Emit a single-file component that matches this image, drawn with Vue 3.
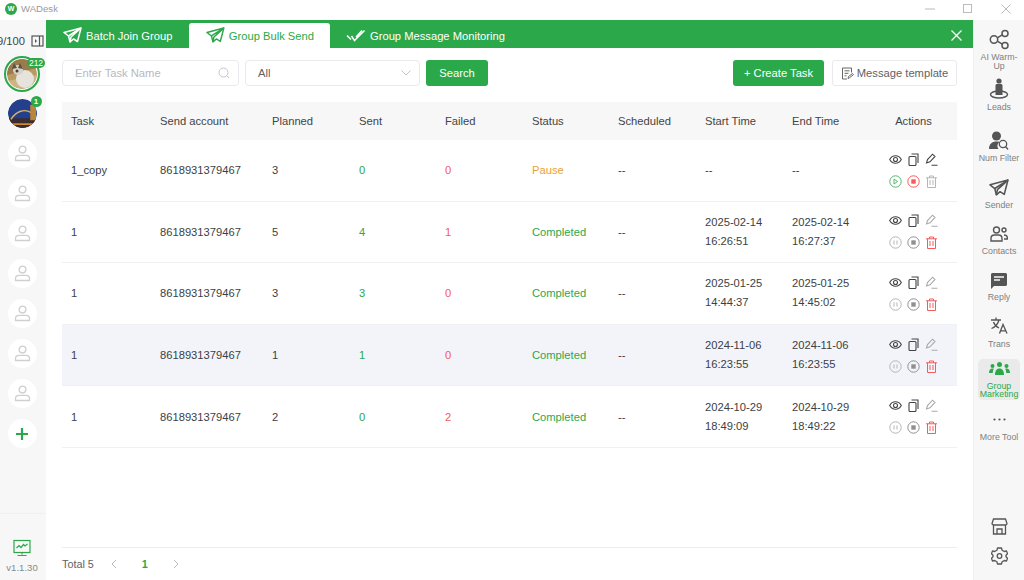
<template>
  <div class="app">
    <header class="titlebar">
      <div class="brand">
        <span class="logo">W</span>
        <span>WADesk</span>
      </div>
      <div class="win-btns">
        <svg width="12" height="12" viewBox="0 0 12 12"><path d="M1 6h10" stroke="#bbb" fill="none" /></svg>
        <svg width="12" height="12" viewBox="0 0 12 12"><rect x="1.5" y="1.5" width="8" height="8" stroke="#bbb" fill="none" /></svg>
        <svg width="12" height="12" viewBox="0 0 12 12"><path d="M1.5 1.5l9 9M10.5 1.5l-9 9" stroke="#bbb" fill="none" /></svg>
      </div>
    </header>

    <div class="body">
      <aside class="left">
        <div class="count-row">
          <span>9/100</span>
          <svg width="13" height="12" viewBox="0 0 13 12">
            <rect x="1" y="1" width="11" height="10" fill="none" stroke="#555" stroke-width="1.2" />
            <path d="M8.5 1v10" stroke="#555" stroke-width="1.2" />
            <path d="M4 4l2 2-2 2z" fill="#555" />
          </svg>
        </div>

        <div class="acct-list">
          <div class="acct acct-main">
            <svg class="ava" width="30" height="30" viewBox="0 0 30 30">
              <defs><clipPath id="c1"><circle cx="15" cy="15" r="15" /></clipPath></defs>
              <g clip-path="url(#c1)">
                <rect width="30" height="30" fill="#b99a63" />
                <path d="M0 0h30v9L0 16z" fill="#9a7c4b" />
                <path d="M0 22l30-6v14H0z" fill="#cdb483" />
                <ellipse cx="18" cy="20" rx="9" ry="9" fill="#e6e2dc" />
                <ellipse cx="11" cy="11" rx="5" ry="5" fill="#d8d2c8" />
                <path d="M7 4l3 5-5 1zM13 4l3 6-5-1z" fill="#5c5148" />
                <circle cx="10" cy="12" r="1.5" fill="#4a4038" />
              </g>
            </svg>
            <span class="badge badge-wide">212</span>
          </div>
          <div class="acct">
            <svg class="ava" width="29" height="29" viewBox="0 0 30 30">
              <defs><clipPath id="c2"><circle cx="15" cy="15" r="15" /></clipPath></defs>
              <g clip-path="url(#c2)">
                <rect width="30" height="30" fill="#243f8c" />
                <rect y="20" width="30" height="10" fill="#3c2c2e" />
                <path d="M3 21C9 12 17 10 24 14" stroke="#d9b26a" stroke-width="1.5" fill="none" />
                <path d="M23 6h6v16h-6z" fill="#b9853a" />
                <path d="M0 25h30v2H0z" fill="#c98a32" />
              </g>
            </svg>
            <span class="badge">1</span>
          </div>
          <div v-for="n in 7" :key="n" class="acct empty">
            <svg width="17" height="17" viewBox="0 0 17 17" fill="none" stroke="#cfcfcf" stroke-width="1.3">
              <circle cx="8.5" cy="4.6" r="3.4" />
              <path d="M1.5 15.5v-2c0-2 1.6-3.2 3.5-3.2h7c1.9 0 3.5 1.2 3.5 3.2v2z" />
            </svg>
          </div>
          <div class="acct empty">
            <svg width="14" height="14" viewBox="0 0 14 14"><path d="M7 1v12M1 7h12" stroke="#2ba84a" stroke-width="2.2" fill="none" /></svg>
          </div>
        </div>

        <div class="left-foot">
          <svg width="18" height="18" viewBox="0 0 18 18" fill="none" stroke="#2ba84a" stroke-width="1.2">
            <rect x="1" y="1.5" width="16" height="12" />
            <path d="M3.5 9L6 6.5l2 2 2.500-3L12 7l2.500-2" />
            <path d="M9 13.5v2M4.500 16.500h9" />
          </svg>
          <span class="version">v1.1.30</span>
        </div>
      </aside>

      <main class="main">
        <nav class="tabs">
          <div v-for="tab in tabs" :key="tab.label" class="tab" :class="{ active: tab.active, 'tab-check': tab.check }">
            <svg v-if="tab.check" width="20" height="14" viewBox="0 0 20 14" fill="none" stroke="currentColor" stroke-width="1.5">
              <path d="M1 6.500l4 4M5.500 7l3 4.500L18.500 1.500M10 8l6-6.500" />
            </svg>
            <svg v-else width="19" height="17" viewBox="0 0 19 17" fill="none" stroke="currentColor" stroke-width="1.5" stroke-linejoin="round">
              <path d="M18 1L1 5.500l4.500 3.500L7 15l3.500-3 4 2.500z" />
              <path d="M18 1L5.500 9M7 15l1-5 10-9" />
            </svg>
            <span>{{ tab.label }}</span>
          </div>
          <svg class="tabs-close" width="11" height="11" viewBox="0 0 11 11"><path d="M.5.500l10 10M10.500.500l-10 10" stroke="#fff" stroke-width="1.3" fill="none" /></svg>
        </nav>

        <div class="content">
          <div class="toolbar">
            <div class="field name-field">
              <span class="placeholder">Enter Task Name</span>
              <svg width="12" height="12" viewBox="0 0 12 12" fill="none" stroke="#c0c4cc"><circle cx="5.5" cy="5.5" r="4.5" /><path d="M9 9l2 2" /></svg>
            </div>
            <div class="field select-field">
              <span>All</span>
              <svg width="10" height="6" viewBox="0 0 10 6" fill="none" stroke="#c0c4cc"><path d="M.5.500L5 5 9.500.500" /></svg>
            </div>
            <button class="btn primary search">Search</button>
            <div class="spacer"></div>
            <button class="btn primary create">+ Create Task</button>
            <button class="btn plain tmpl">
              <svg width="13" height="13" viewBox="0 0 13 13" fill="none" stroke="#666">
                <path d="M10.500 5.500V1H1.500v11h4.500" />
                <path d="M3.500 3.800h5M3.500 6.300h4M3.500 8.800h2" />
                <path d="M7 11.500l.5-2 4-3 1 1.200-4 3z" />
              </svg>
              <span>Message template</span>
            </button>
          </div>

          <div class="table">
            <div class="tr th">
              <div v-for="h in headers" :key="h" class="td" :class="{ center: h === 'Actions' }">{{ h }}</div>
            </div>
            <div v-for="(r, i) in rows" :key="i" class="tr" :class="{ hover: i === 3 }">
              <div class="td">{{ r.task }}</div>
              <div class="td">8618931379467</div>
              <div class="td">{{ r.planned }}</div>
              <div class="td green">{{ r.sent }}</div>
              <div class="td red">{{ r.failed }}</div>
              <div class="td" :class="r.status === 'Pause' ? 'orange' : 'green'">{{ r.status }}</div>
              <div class="td">--</div>
              <div class="td times">{{ r.start }}</div>
              <div class="td times">{{ r.end }}</div>
              <div class="td actions">
                <div class="act-row">
                  <svg width="13" height="13" viewBox="0 0 13 13" fill="none" stroke="#444" stroke-width="1.1">
                    <path d="M.7 6.500C2 4 4 2.800 6.500 2.800S11 4 12.300 6.500C11 9 9 10.200 6.500 10.200S2 9 .7 6.500z" />
                    <circle cx="6.500" cy="6.500" r="2" />
                  </svg>
                  <svg width="13" height="13" viewBox="0 0 13 13" fill="none" stroke="#444" stroke-width="1.1">
                    <rect x="2" y="3.500" width="7" height="9" rx="1" />
                    <path d="M4.500 1h6.500v9" />
                  </svg>
                  <svg width="13" height="13" viewBox="0 0 13 13" fill="none" :stroke="r.paused ? '#444' : '#aaa'" stroke-width="1.1">
                    <path d="M1.500 10l1-3.500L7.500 1.200l2.500 2.300-5 5.300zM6.500 12.300h6" />
                  </svg>
                </div>
                <div class="act-row">
                  <svg width="13" height="13" viewBox="0 0 13 13" fill="none" :stroke="r.paused ? '#58b56f' : '#b5b5b5'">
                    <circle cx="6.500" cy="6.500" r="5.700" />
                    <path v-if="r.paused" d="M5 4l3.500 2.500L5 9z" />
                    <path v-else d="M5 4.500v4M8 4.500v4" />
                  </svg>
                  <svg width="13" height="13" viewBox="0 0 13 13" fill="none" :stroke="r.paused ? '#f45b5b' : '#909090'">
                    <circle cx="6.500" cy="6.500" r="5.700" />
                    <rect x="4.300" y="4.300" width="4.400" height="4.400" :fill="r.paused ? '#f45b5b' : '#909090'" stroke="none" />
                  </svg>
                  <svg width="13" height="13" viewBox="0 0 13 13" fill="none" :stroke="r.paused ? '#b5b5b5' : '#f45b5b'">
                    <path d="M1 2.800h11M4.500 2.800V1h4v1.800M2.500 2.800v9.700h8V2.800M5 5v5M8 5v5" />
                  </svg>
                </div>
              </div>
            </div>
          </div>

          <div class="pager">
            <span>Total 5</span>
            <svg width="6" height="10" viewBox="0 0 6 10" fill="none" stroke="#b5b9c2"><path d="M5 1L1 5l4 4" /></svg>
            <span class="page-num">1</span>
            <svg width="6" height="10" viewBox="0 0 6 10" fill="none" stroke="#b5b9c2"><path d="M1 1l4 4-4 4" /></svg>
          </div>
        </div>
      </main>

      <aside class="right">
        <div class="tool tool-warm">
          <svg width="21" height="21" viewBox="0 0 21 21" fill="none" stroke="#555" stroke-width="1.5">
            <circle cx="5" cy="10.500" r="3.700" /><circle cx="16" cy="4.500" r="3" /><circle cx="16" cy="16.500" r="3" />
            <path d="M8.300 8.800l5-3M8.300 12.200l5 3" />
          </svg>
          <span>AI Warm-Up</span>
        </div>
        <div class="tool tool-leads">
          <svg width="20" height="22" viewBox="0 0 20 22" fill="#555">
            <circle cx="10" cy="3" r="2.600" />
            <path d="M6.500 7.500c0-1 .8-1.500 1.500-1.500h4c.7 0 1.500.5 1.500 1.500V17h-7z" />
            <ellipse cx="10" cy="16.500" rx="8.500" ry="3.500" fill="none" stroke="#555" stroke-width="1.5" />
          </svg>
          <span>Leads</span>
        </div>
        <div class="tool tool-filter">
          <svg width="20" height="20" viewBox="0 0 20 20" fill="#555">
            <circle cx="7.500" cy="5" r="4.500" />
            <path d="M0 18c0-5 3-7.500 7.500-7.500 1 0 2 .1 2.800.4A5.500 5.500 0 0 0 9.500 18z" />
            <circle cx="14" cy="13" r="3.700" fill="none" stroke="#555" stroke-width="1.3" />
            <path d="M16.500 15.500L19 18.500" stroke="#555" stroke-width="1.3" />
          </svg>
          <span>Num Filter</span>
        </div>
        <div class="tool tool-sender">
          <svg width="20" height="18" viewBox="0 0 19 17" fill="none" stroke="#555" stroke-width="1.5" stroke-linejoin="round">
            <path d="M18 1L1 5.500l4.500 3.500L7 15l3.500-3 4 2.500z" />
            <path d="M18 1L5.500 9M7 15l1-5 10-9" />
          </svg>
          <span>Sender</span>
        </div>
        <div class="tool tool-contacts">
          <svg width="18" height="16" viewBox="0 0 18 16" fill="none" stroke="#555" stroke-width="1.4">
            <circle cx="6.500" cy="4" r="3" />
            <path d="M1 15v-2.500C1 10.500 2.500 9 4.500 9h4c2 0 3.500 1.500 3.500 3.500V15z" />
            <circle cx="14" cy="4" r="2" />
            <path d="M14 9c2 0 3.300 1 3.300 3v1H14" />
          </svg>
          <span>Contacts</span>
        </div>
        <div class="tool tool-reply">
          <svg width="16" height="16" viewBox="0 0 16 16">
            <path d="M0 1.500C0 .7.700 0 1.500 0h13c.8 0 1.500.7 1.500 1.500v10c0 .8-.7 1.500-1.500 1.500H3l-3 3z" fill="#555" />
            <path d="M3 4h10M3 7h6" stroke="#f7f7f7" stroke-width="1.4" />
          </svg>
          <span>Reply</span>
        </div>
        <div class="tool tool-trans">
          <svg width="17" height="17" viewBox="0 0 17 17" fill="none" stroke="#555" stroke-width="1.3">
            <path d="M0 3h10M5 .5V3M8 3C7 7 4 10 .5 11.500M2.500 5c1 3 3.500 5 5.500 6" />
            <path d="M8.500 16.500L12 7.500l4 9M9.800 13.800h5" />
          </svg>
          <span>Trans</span>
        </div>
        <div class="tool tool-active">
          <svg width="21" height="13" viewBox="0 0 21 13" fill="#2ba84a">
            <circle cx="10.500" cy="2.500" r="2.500" /><circle cx="3.500" cy="4" r="2" /><circle cx="17.500" cy="4" r="2" />
            <path d="M6 13c0-4 1.500-6.500 4.500-6.500S15 9 15 13zM0 11c0-2.500 1.200-4.500 3.500-4.500.6 0 1 .1 1.300.3C4 8 3.800 9.500 3.800 11zM21 11c0-2.500-1.200-4.500-3.500-4.500-.6 0-1 .1-1.300.3.800 1.200 1 2.700 1 4.200z" />
          </svg>
          <span>Group Marketing</span>
        </div>
        <div class="tool tool-more">
          <svg width="13" height="3" viewBox="0 0 13 3" fill="#555"><circle cx="1.500" cy="1.500" r="1.100" /><circle cx="6.500" cy="1.500" r="1.100" /><circle cx="11.500" cy="1.500" r="1.100" /></svg>
          <span>More Tool</span>
        </div>
        <div class="spacer"></div>
        <svg class="bottom-ico" width="17" height="17" viewBox="0 0 17 17" fill="none" stroke="#555" stroke-width="1.3">
          <path d="M2.500 1h12L16 5.500c0 1-1.200 1.500-2.500 1.500h-10C2.200 7 1 6.500 1 5.500z" />
          <path d="M2.500 7v9h12V7M6 16v-5h5v5" />
        </svg>
        <svg class="bottom-ico gear" width="17" height="18" viewBox="0 0 17 18" fill="none" stroke="#555" stroke-width="1.3" stroke-linejoin="round">
          <path d="M6.500 1h4l.6 2.300 2.200 1.200 2.200-.6 1 2.800L15 8.200v1.600l1.500 1.500-1 2.800-2.200-.6-2.200 1.200-.6 2.300h-4l-.6-2.300-2.200-1.200-2.200.6-1-2.800L2 9.800V8.200L.5 6.700l1-2.800 2.200.6 2.200-1.200z" />
          <circle cx="8.500" cy="9" r="2.300" />
        </svg>
      </aside>
    </div>
  </div>
</template>

<script setup>
const tabs = [
  { label: 'Batch Join Group' },
  { label: 'Group Bulk Send', active: true },
  { label: 'Group Message Monitoring', check: true },
]

const headers = ['Task', 'Send account', 'Planned', 'Sent', 'Failed', 'Status', 'Scheduled', 'Start Time', 'End Time', 'Actions']

const rows = [
  { task: '1_copy', planned: 3, sent: 0, failed: 0, status: 'Pause', start: '--', end: '--', paused: true },
  { task: '1', planned: 5, sent: 4, failed: 1, status: 'Completed', start: '2025-02-14 16:26:51', end: '2025-02-14 16:27:37' },
  { task: '1', planned: 3, sent: 3, failed: 0, status: 'Completed', start: '2025-01-25 14:44:37', end: '2025-01-25 14:45:02' },
  { task: '1', planned: 1, sent: 1, failed: 0, status: 'Completed', start: '2024-11-06 16:23:55', end: '2024-11-06 16:23:55' },
  { task: '1', planned: 2, sent: 0, failed: 2, status: 'Completed', start: '2024-10-29 18:49:09', end: '2024-10-29 18:49:22' },
]
</script>

<style>
html,
body {
  margin: 0;
  background: #fff;
}
</style>

<style scoped>
.app {
  width: 1024px;
  height: 580px;
  display: flex;
  flex-direction: column;
  overflow: hidden;
  font-family: "Liberation Sans", Arial, sans-serif;
  font-size: 11.2px;
  color: #3c3f44;
}
.titlebar {
  height: 20px;
  flex: none;
  box-sizing: border-box;
  padding: 0 0 3px 5px;
  display: flex;
  justify-content: space-between;
  align-items: center;
}
.brand {
  display: flex;
  align-items: center;
  gap: 4px;
  color: #999;
  font-size: 9.6px;
}
.logo {
  width: 12px;
  height: 12px;
  border-radius: 50%;
  background: #2ba84a;
  color: #fff;
  font-size: 7px;
  font-weight: 700;
  line-height: 12px;
  text-align: center;
}
.win-btns {
  display: flex;
  gap: 26px;
  padding-right: 12px;
}
.body {
  flex: 1;
  display: flex;
  min-height: 0;
}
.left {
  width: 46px;
  flex: none;
  background: #f7f7f7;
  display: flex;
  flex-direction: column;
  overflow: hidden;
}
.count-row {
  height: 34px;
  flex: none;
  margin-left: -3px;
  margin-top: 4px;
  display: flex;
  align-items: center;
  gap: 6px;
  color: #444;
  font-size: 11.2px;
  white-space: nowrap;
}
.acct-list {
  display: flex;
  flex-direction: column;
  align-items: center;
  gap: 11px;
  padding-right: 2px;
  margin-top: -2px;
}
.acct {
  position: relative;
  width: 29px;
  height: 29px;
  border-radius: 50%;
  display: flex;
  align-items: center;
  justify-content: center;
}
.acct .ava {
  border-radius: 50%;
  flex: none;
}
.acct-main {
  width: 36px;
  height: 36px;
  box-sizing: border-box;
  border: 2px solid #2ba84a;
  margin-bottom: -4px;
}
.empty {
  background: #fff;
}
.badge {
  position: absolute;
  top: -3px;
  right: -5px;
  width: 11px;
  height: 11px;
  line-height: 11px;
  text-align: center;
  border-radius: 6px;
  background: #2ba84a;
  color: #fff;
  font-size: 8px;
  font-weight: 700;
}
.badge-wide {
  top: 0;
  right: -7px;
  width: 18px;
  height: 10px;
  line-height: 10px;
  font-size: 8.5px;
  font-weight: 400;
}
.left-foot {
  margin-top: auto;
  border-top: 1px solid #f0f0f0;
  height: 67px;
  flex: none;
  box-sizing: border-box;
  display: flex;
  flex-direction: column;
  align-items: center;
  justify-content: flex-end;
  gap: 5px;
  padding-bottom: 7px;
  padding-right: 2px;
}
.version {
  color: #8a8a8a;
  font-size: 9.6px;
}
.main {
  flex: 1;
  min-width: 0;
  display: flex;
  flex-direction: column;
}
.tabs {
  height: 28px;
  flex: none;
  background: #2ba84a;
  display: flex;
  align-items: flex-end;
  position: relative;
  box-sizing: border-box;
}
.tab {
  height: 25px;
  display: flex;
  align-items: center;
  gap: 4px;
  padding: 0 16px 0 17px;
  color: #fff;
  font-size: 11.2px;
  box-sizing: border-box;
  white-space: nowrap;
}
.tab:first-child {
  width: 143px;
}
.tab.active {
  width: 141px;
  background: #fff;
  color: #2ba84a;
  border-radius: 3px 3px 0 0;
}
.tab-check {
  padding-left: 16px;
}
.tabs-close {
  position: absolute;
  right: 11px;
  top: 10px;
}
.content {
  flex: 1;
  min-height: 0;
  display: flex;
  flex-direction: column;
  padding: 12px 16px 0;
}
.toolbar {
  display: flex;
  align-items: center;
  gap: 6px;
  height: 26px;
  flex: none;
}
.field {
  height: 26px;
  box-sizing: border-box;
  border: 1px solid #e8eaee;
  border-radius: 4px;
  display: flex;
  align-items: center;
  justify-content: space-between;
  padding: 0 8px 0 12px;
  color: #606266;
}
.name-field {
  width: 177px;
}
.select-field {
  width: 175px;
}
.placeholder {
  color: #b5b9c2;
}
.spacer {
  flex: 1;
}
.btn {
  height: 26px;
  box-sizing: border-box;
  border-radius: 3px;
  border: 1px solid transparent;
  font: inherit;
  padding: 0;
  display: flex;
  align-items: center;
  justify-content: center;
}
.primary {
  background: #2ba84a;
  color: #fff;
}
.search {
  width: 62px;
}
.create {
  width: 91px;
  margin-right: 2px;
}
.plain {
  background: #fff;
  border-color: #e8eaee;
  color: #606266;
  gap: 3px;
}
.tmpl {
  width: 125px;
}
.table {
  margin-top: 16px;
  flex: none;
}
.tr {
  display: grid;
  grid-template-columns: 89px 112px 87px 86px 87px 86px 87px 87px 87px 87px;
  height: 61.6px;
  align-items: center;
  border-bottom: 1px solid #f0f1f4;
  box-sizing: border-box;
}
.th {
  height: 38px;
  background: #f7f7f7;
  border-bottom: 0;
  color: #444;
}
.hover {
  background: #f3f4f9;
}
.td {
  padding-left: 9px;
}
.center {
  padding-left: 0;
  text-align: center;
}
.times {
  line-height: 19px;
  padding-right: 20px;
}
.green {
  color: #2ba84a;
}
.red {
  color: #f45b5b;
}
.orange {
  color: #e6a23c;
}
.actions {
  padding-left: 0;
  display: flex;
  flex-direction: column;
  gap: 9px;
  align-items: center;
}
.act-row {
  display: flex;
  gap: 5px;
}
.pager {
  margin-top: auto;
  height: 32px;
  flex: none;
  border-top: 1px solid #ebedf2;
  display: flex;
  align-items: center;
  color: #606266;
  font-size: 10.8px;
}
.pager svg:first-of-type {
  margin-left: 17px;
}
.page-num {
  color: #2ba84a;
  font-weight: 700;
  margin: 0 25px;
}
.right {
  width: 51px;
  flex: none;
  background: #f7f7f7;
  border-left: 1px solid #efefef;
  box-sizing: border-box;
  display: flex;
  flex-direction: column;
  align-items: center;
  padding: 9px 0 15px;
}
.tool {
  width: 42px;
  display: flex;
  flex-direction: column;
  align-items: center;
  color: #808080;
  font-size: 8.8px;
  line-height: 8.5px;
  text-align: center;
  gap: 3px;
  margin-bottom: 15px;
}
.tool-warm {
  margin-bottom: 8px;
}
.tool-leads {
  margin-bottom: 19px;
}
.tool-filter {
  margin-bottom: 17px;
}
.tool-sender {
  gap: 4px;
  margin-bottom: 16px;
}
.tool-contacts {
  gap: 5px;
  margin-bottom: 18px;
}
.tool-reply {
  gap: 4px;
  margin-bottom: 15px;
}
.tool-trans {
  gap: 6px;
  margin-bottom: 11px;
}
.tool-active {
  background: #eaeaea;
  border-radius: 5px;
  color: #2ba84a;
  padding: 3px 0 2px;
  margin-bottom: 18px;
  gap: 7px;
  line-height: 8px;
}
.tool-more {
  gap: 12px;
}
.bottom-ico {
  flex: none;
}
.gear {
  margin-top: 12px;
}
</style>
